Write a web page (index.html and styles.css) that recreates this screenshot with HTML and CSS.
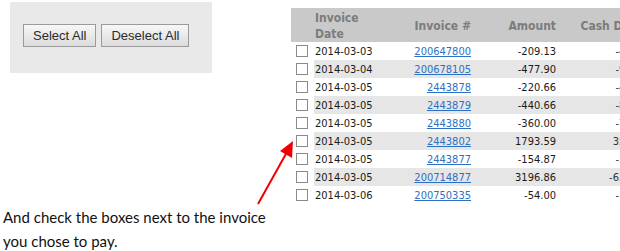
FILE: index.html
```html
<!DOCTYPE html>
<html lang="en">
<head>
    <meta charset="UTF-8" />
    <meta name="viewport" content="width=device-width, initial-scale=1.0" />
    <title>Pay Invoices</title>
    <link rel="stylesheet" href="styles.css">
</head>
<body>
    <div id="page">
        <div id="left">
            <div id="button-panel">
                <button class="btn">Select All</button>
                <button class="btn">Deselect All</button>
            </div>
            <div id="note">And check the boxes next to the invoice<br>you chose to pay.</div>
        </div>

        <div id="right">
            <table id="invoices">
                <colgroup>
                    <col class="c-check">
                    <col class="c-date">
                    <col class="c-inv">
                    <col class="c-amt">
                    <col class="c-cash">
                </colgroup>
                <thead>
                    <tr>
                        <th></th>
                        <th class="left">Invoice Date</th>
                        <th>Invoice #</th>
                        <th>Amount</th>
                        <th>Cash Discount</th>
                    </tr>
                </thead>
                <tbody>
                    <tr><td class="check"><span class="box"></span></td><td>2014-03-03</td><td class="num"><a href="#">200647800</a></td><td class="num">-209.13</td><td class="cash">-4.18</td></tr>
                    <tr><td class="check"><span class="box"></span></td><td>2014-03-04</td><td class="num"><a href="#">200678105</a></td><td class="num">-477.90</td><td class="cash">-9.56</td></tr>
                    <tr><td class="check"><span class="box"></span></td><td>2014-03-05</td><td class="num"><a href="#">2443878</a></td><td class="num">-220.66</td><td class="cash">-4.41</td></tr>
                    <tr><td class="check"><span class="box"></span></td><td>2014-03-05</td><td class="num"><a href="#">2443879</a></td><td class="num">-440.66</td><td class="cash">-8.81</td></tr>
                    <tr><td class="check"><span class="box"></span></td><td>2014-03-05</td><td class="num"><a href="#">2443880</a></td><td class="num">-360.00</td><td class="cash">-7.20</td></tr>
                    <tr><td class="check"><span class="box"></span></td><td>2014-03-05</td><td class="num"><a href="#">2443802</a></td><td class="num">1793.59</td><td class="cash">35.87</td></tr>
                    <tr><td class="check"><span class="box"></span></td><td>2014-03-05</td><td class="num"><a href="#">2443877</a></td><td class="num">-154.87</td><td class="cash">-3.10</td></tr>
                    <tr><td class="check"><span class="box"></span></td><td>2014-03-05</td><td class="num"><a href="#">200714877</a></td><td class="num">3196.86</td><td class="cash">-63.94</td></tr>
                    <tr><td class="check"><span class="box"></span></td><td>2014-03-06</td><td class="num"><a href="#">200750335</a></td><td class="num">-54.00</td><td class="cash">-1.08</td></tr>
                </tbody>
            </table>
        </div>

        <svg id="arrow" width="60" height="80" viewBox="0 0 60 80">
            <line x1="8" y1="70" x2="37" y2="18" stroke="#f00000" stroke-width="2" />
            <polygon points="43,7 42,24 30,17" fill="#f00000" />
        </svg>
    </div>
</body>
</html>
```

FILE: styles.css
```css
body {
    margin: 0;
    padding: 0;
    background: #fff;
    overflow: hidden;
}

#page {
    display: grid;
    grid-template-columns: 291px 1fr;
    width: 620px;
    height: 251px;
    overflow: hidden;
    position: relative;
}

#left {
    display: flex;
    flex-direction: column;
    justify-content: space-between;
}

#button-panel {
    margin: 2px 0 0 10px;
    width: 189px;
    height: 49px;
    padding: 22px 0 0 13px;
    background-color: #e9e9e9;
    display: flex;
    gap: 5px;
    align-items: flex-start;
}

.btn {
    height: 23px;
    padding: 0 9px;
    font-family: "Liberation Sans", Arial, sans-serif;
    font-size: 13px;
    color: #2b2b2b;
    background: linear-gradient(#f7f7f7, #dcdcdc);
    border: 1px solid #9a9a9a;
    border-radius: 0;
}

#note {
    padding: 0 0 0 3px;
    font-family: Lato, "Open Sans", sans-serif;
    font-size: 15px;
    line-height: 24px;
    color: #111;
    margin-bottom: -2px;
}

#right {
    padding-top: 8px;
    overflow: hidden;
}

#invoices {
    border-collapse: collapse;
    table-layout: fixed;
    width: 380px;
    font-family: "DejaVu Sans Condensed", "DejaVu Sans", sans-serif;
    font-size: 11px;
    color: #1a1a1a;
}

.c-check { width: 23px; }
.c-date { width: 64px; }
.c-inv { width: 97px; }
.c-amt { width: 85px; }
.c-cash { width: 111px; }

#invoices thead tr {
    background-color: #c9c9c9;
}

#invoices th {
    height: 32px;
    padding: 2px 4px 0 1px;
    line-height: 16px;
    font-size: 12px;
    font-weight: bold;
    color: #7c7c7c;
    text-align: right;
    white-space: normal;
}

#invoices th:last-child {
    white-space: nowrap;
}

#invoices th.left {
    text-align: left;
}

#invoices td {
    height: 18px;
    padding: 0 4px 0 1px;
    white-space: nowrap;
}

#invoices tbody tr:nth-child(even) td {
    background-color: #e6e6e6;
}

#invoices tbody tr:nth-child(even) td.check {
    background-color: #fff;
}

td.check {
    text-align: center;
}

.box {
    display: block;
    width: 10px;
    height: 10px;
    margin: 0 0 0 4px;
    border: 1px solid #8a8a8a;
    background: #fff;
}

td.num {
    text-align: right;
}

td.cash {
    text-align: right;
    padding-right: 30px !important;
    color: #333;
}

#invoices a {
    color: #2f6fc4;
    text-decoration: underline;
}

#arrow {
    position: absolute;
    left: 250px;
    top: 134px;
}
```
